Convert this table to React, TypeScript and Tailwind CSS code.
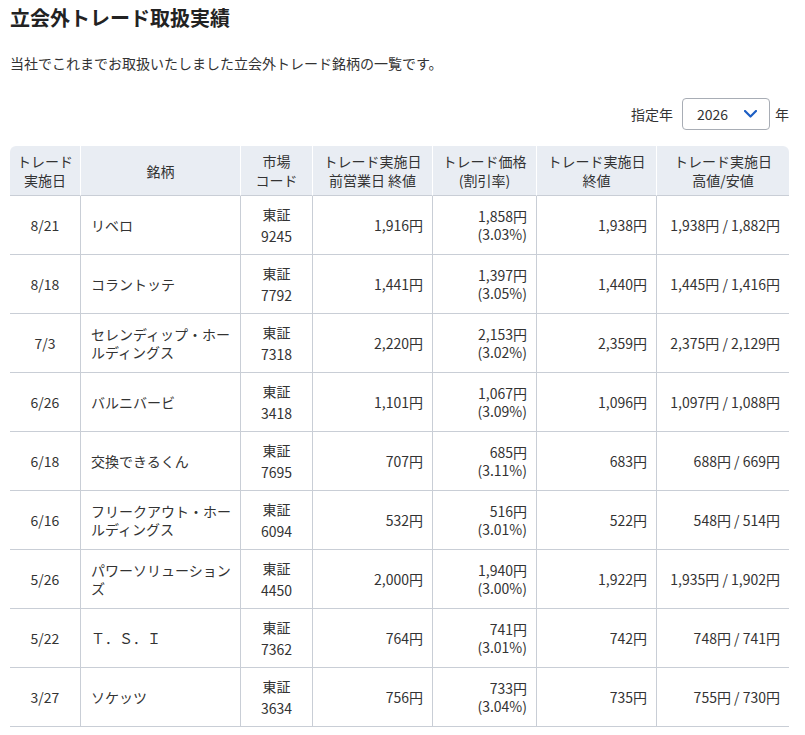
import React from "react";

type Trade = {
  date: string;
  name: string;
  code: string;
  prevClose: string;
  price: string;
  rate: string;
  close: string;
  highLow: string;
};

const trades: Trade[] = [
  { date: "8/21", name: "リベロ", code: "9245", prevClose: "1,916円", price: "1,858円", rate: "(3.03%)", close: "1,938円", highLow: "1,938円 / 1,882円" },
  { date: "8/18", name: "コラントッテ", code: "7792", prevClose: "1,441円", price: "1,397円", rate: "(3.05%)", close: "1,440円", highLow: "1,445円 / 1,416円" },
  { date: "7/3", name: "セレンディップ・ホールディングス", code: "7318", prevClose: "2,220円", price: "2,153円", rate: "(3.02%)", close: "2,359円", highLow: "2,375円 / 2,129円" },
  { date: "6/26", name: "バルニバービ", code: "3418", prevClose: "1,101円", price: "1,067円", rate: "(3.09%)", close: "1,096円", highLow: "1,097円 / 1,088円" },
  { date: "6/18", name: "交換できるくん", code: "7695", prevClose: "707円", price: "685円", rate: "(3.11%)", close: "683円", highLow: "688円 / 669円" },
  { date: "6/16", name: "フリークアウト・ホールディングス", code: "6094", prevClose: "532円", price: "516円", rate: "(3.01%)", close: "522円", highLow: "548円 / 514円" },
  { date: "5/26", name: "パワーソリューションズ", code: "4450", prevClose: "2,000円", price: "1,940円", rate: "(3.00%)", close: "1,922円", highLow: "1,935円 / 1,902円" },
  { date: "5/22", name: "Ｔ．Ｓ．Ｉ", code: "7362", prevClose: "764円", price: "741円", rate: "(3.01%)", close: "742円", highLow: "748円 / 741円" },
  { date: "3/27", name: "ソケッツ", code: "3634", prevClose: "756円", price: "733円", rate: "(3.04%)", close: "735円", highLow: "755円 / 730円" },
];

const th = "bg-[#e9edf3] border-b border-r border-b-[#c9ced6] border-r-white px-1 pt-[6px] pb-[5px] font-normal leading-[19px] text-center align-middle";
const td = "h-[59px] border-b border-r border-[#c9ced6] align-middle";

export default function App() {
  return (
    <div
      className="min-h-screen bg-white text-[#333] text-[14px]"
      style={{ fontFamily: '"Noto Sans CJK JP", "Noto Sans", sans-serif' }}
    >
      <div className="ml-[10px] w-[779px] pt-[4px]">
        <h1 className="text-[20px] leading-[28px] font-bold text-[#222]">立会外トレード取扱実績</h1>
        <p className="mt-[20px] leading-[22px]">当社でこれまでお取扱いたしました立会外トレード銘柄の一覧です。</p>

        <div className="mt-[24px] flex items-center justify-end">
          <span className="mr-[9px]">指定年</span>
          <div className="flex h-[32px] w-[88px] items-center rounded-[4px] border border-[#a8adb5] pl-[14px] pr-[12px]">
            <span className="flex-1">2026</span>
            <svg width="13" height="8" viewBox="0 0 13 8" fill="none">
              <polyline points="1,1 6.5,6.5 12,1" stroke="#1d5fc4" strokeWidth="2.2" strokeLinecap="round" strokeLinejoin="round" />
            </svg>
          </div>
          <span className="ml-[5px]">年</span>
        </div>

        <table className="mt-[16px] w-[779px] table-fixed border-separate border-spacing-0">
          <colgroup>
            <col className="w-[71px]" />
            <col className="w-[160px]" />
            <col className="w-[72px]" />
            <col className="w-[120px]" />
            <col className="w-[104px]" />
            <col className="w-[120px]" />
            <col className="w-[132px]" />
          </colgroup>
          <thead>
            <tr>
              <th className={`${th} rounded-tl-[6px]`}>トレード<br />実施日</th>
              <th className={th}>銘柄</th>
              <th className={th}>市場<br />コード</th>
              <th className={th}>トレード実施日<br />前営業日 終値</th>
              <th className={th}>トレード価格<br />(割引率)</th>
              <th className={th}>トレード実施日<br />終値</th>
              <th className={`${th} border-r-0 rounded-tr-[6px]`}>トレード実施日<br />高値/安値</th>
            </tr>
          </thead>
          <tbody>
            {trades.map((t) => (
              <tr key={t.date + t.code}>
                <td className={`${td} text-center`}>{t.date}</td>
                <td className={`${td} pl-[10px] pr-[8px] text-left leading-[18px]`}>{t.name}</td>
                <td className={`${td} text-center leading-[22px]`}>
                  東証
                  <br />
                  {t.code}
                </td>
                <td className={`${td} pr-[9px] text-right`}>{t.prevClose}</td>
                <td className={`${td} pr-[9px] text-right leading-[18px]`}>
                  {t.price}
                  <br />
                  {t.rate}
                </td>
                <td className={`${td} pr-[9px] text-right`}>{t.close}</td>
                <td className={`${td} border-r-0 pr-[9px] text-right`}>{t.highLow}</td>
              </tr>
            ))}
          </tbody>
        </table>
      </div>
    </div>
  );
}
